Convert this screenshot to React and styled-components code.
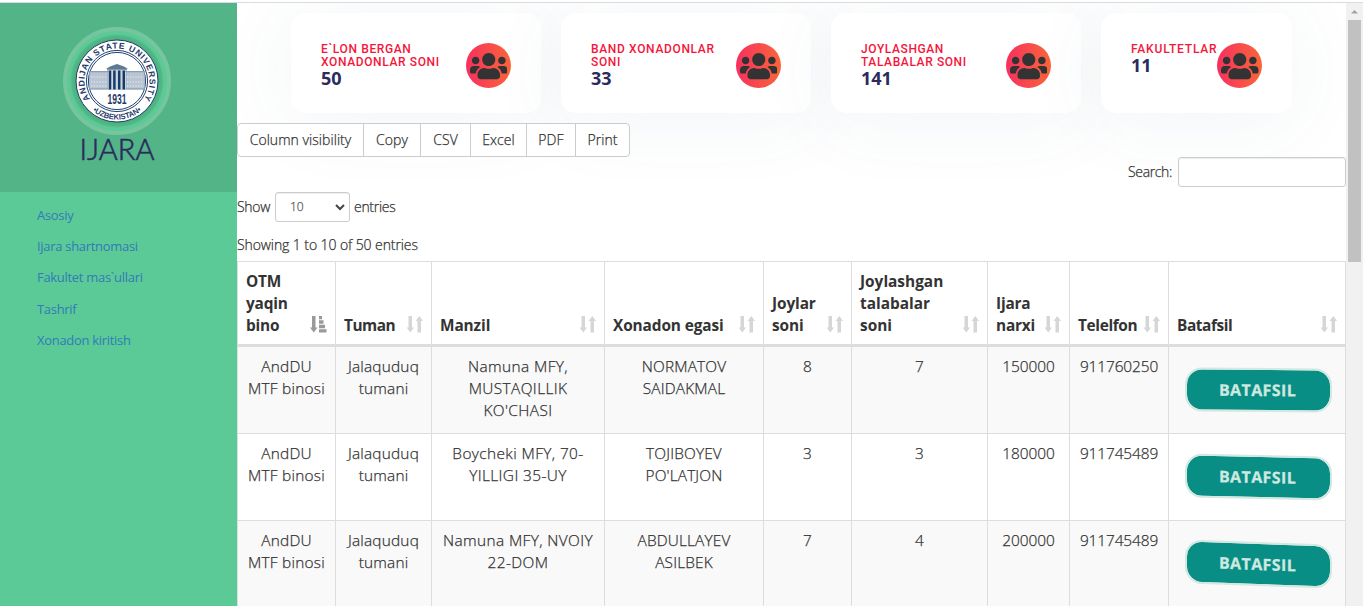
import React from "react";
import styled, { createGlobalStyle } from "styled-components";
import { FaUsers } from "react-icons/fa";

const Global = createGlobalStyle`
  *, *::before, *::after { box-sizing: border-box; }
  html, body { margin: 0; height: 606px; overflow: hidden; background: #fff; }
  body { font-family: "Open Sans", "Noto Sans", sans-serif; font-weight: 300; -webkit-text-stroke: 0.25px; font-size: 14px; line-height: 20px; color: #333; }
`;

const Page = styled.div`
  height: 606px;
  padding-top: 2px;
  display: flex;
  flex-direction: column;
  overflow: hidden;
`;
const TopLine = styled.div`
  height: 1px;
  flex: none;
  background: #d9dbdf;
`;
const Shell = styled.div`
  flex: 1;
  min-height: 0;
  display: flex;
`;
const Sidebar = styled.aside`
  width: 237px;
  flex: none;
  background: #5bca97;
`;
const Brand = styled.div`
  height: 189px;
  padding: 24px 3px 0 0;
  background: #53b587;
  display: flex;
  flex-direction: column;
  align-items: center;
`;
const Ring = styled.div`
  width: 108px;
  height: 108px;
  flex: none;
  border-radius: 50%;
  border: 4px solid #76c59c;
  background: radial-gradient(circle, #4aaa7b 40px, #52b886 45px, #5bca97 47px);
  display: flex;
  align-items: center;
  justify-content: center;
  -webkit-text-stroke: 0;
`;
const BrandName = styled.h1`
  margin: 0;
  font-family: Lato, "Open Sans", sans-serif;
  font-weight: 300;
  font-size: 29px;
  line-height: 27px;
  -webkit-text-stroke: 0.6px #2b2b5e;
  color: #2b2b5e;
`;
const Menu = styled.nav`
  padding: 8px 0 0 37px;
  display: flex;
  flex-direction: column;
`;
const MenuLink = styled.a`
  height: 31.2px;
  line-height: 31px;
  font-size: 13px;
  font-weight: 400;
  -webkit-text-stroke: 0;
  letter-spacing: -0.3px;
  color: #337ab7;
`;

const Main = styled.main`
  width: 1109px;
  flex: none;
  overflow: hidden;
`;
const Cards = styled.section`
  height: 110px;
  padding: 10px 54px 0;
  display: flex;
  gap: 20px;
`;
const Card = styled.article`
  width: ${(p) => p.$w}px;
  height: 100px;
  flex: none;
  padding: 30px;
  border-radius: 15px;
  background: #fff;
  box-shadow: 0 7px 80px rgba(60, 95, 125, 0.07);
  display: flex;
  justify-content: space-between;
  -webkit-text-stroke: 0;
`;
const CardTitle = styled.div`
  font-family: Roboto, "Liberation Sans", sans-serif;
  font-weight: 500;
  font-size: 12px;
  line-height: 13px;
  letter-spacing: ${(p) => p.$ls}px;
  color: #f5163b;
  white-space: pre-line;
`;
const CardValue = styled.div`
  font-weight: 700;
  font-size: 18px;
  line-height: 18px;
  color: #2b2b5e;
`;
const Badge = styled.div`
  width: 45px;
  height: 45px;
  flex: none;
  border-radius: 50%;
  background: linear-gradient(90deg, #f7305f, #f9663a);
  color: #333;
  display: flex;
  align-items: center;
  justify-content: center;
  svg { width: 37.5px; height: 30px; }
`;

const Buttons = styled.div`
  position: relative;
  margin-top: 10px;
  display: flex;
  height: 34px;
  width: 393px;
  border: 1px solid #ccc;
  border-radius: 4px;
  background: #fff;
`;
const ToolButton = styled.button`
  width: ${(p) => p.$w}px;
  padding: 0;
  border: 0;
  border-right: 1px solid #ccc;
  background: transparent;
  font: inherit;
  letter-spacing: 0.05px;
  color: #333;
  white-space: nowrap;
  &:last-child { border-right: 0; }
`;
const SearchRow = styled.label`
  height: 30px;
  display: flex;
  justify-content: flex-end;
  align-items: center;
  gap: 6px;
  letter-spacing: -0.35px;
`;
const SearchInput = styled.input`
  width: 168px;
  height: 30px;
  border: 1px solid #ccc;
  border-radius: 3px;
  background: #fff;
  box-shadow: inset 0 1px 1px rgba(0, 0, 0, 0.075);
`;
const LengthRow = styled.div`
  margin-top: 5px;
  height: 30px;
  display: flex;
  align-items: center;
  letter-spacing: -0.3px;
`;
const Select = styled.div`
  width: 75px;
  height: 30px;
  margin: 0 4px;
  padding: 0 4px 0 14px;
  border: 1px solid #ccc;
  border-radius: 3px;
  background: #fff;
  box-shadow: inset 0 1px 1px rgba(0, 0, 0, 0.075);
  display: flex;
  align-items: center;
  justify-content: space-between;
  font-size: 12px;
  letter-spacing: 0;
  color: #555;
`;
const ShowText = styled.span`
  width: 34px;
`;
const Info = styled.div`
  margin-top: 13px;
  height: 26px;
  line-height: 20px;
  letter-spacing: -0.09px;
`;

const Table = styled.table`
  width: 1109px;
  table-layout: fixed;
  border-collapse: separate;
  border-spacing: 0;
  border: 1px solid #ddd;
  border-width: 1px 0 0 1px;
  font-size: 15.4px;
  line-height: 22px;
`;
const HeadCell = styled.th`
  height: 85px;
  padding: 8px 8px 7px;
  border-right: 1px solid #ddd;
  border-bottom: 3px solid #ddd;
  vertical-align: bottom;
  text-align: left;
  font-weight: 700;
  -webkit-text-stroke: 0;
  letter-spacing: ${(p) => p.$ls}px;
`;
const HeadInner = styled.div`
  display: flex;
  align-items: flex-end;
  justify-content: space-between;
  white-space: pre;
  svg { flex: none; display: block; margin: 0 0 4px; }
`;
const Row = styled.tr`
  background: ${(p) => (p.$odd ? "#f9f9f9" : "#fff")};
`;
const Cell = styled.td`
  height: 87px;
  padding: ${(p) => (p.$middle ? "8px 0" : "9px 0 7px")};
  border-right: 1px solid #ddd;
  border-bottom: 1px solid #ddd;
  vertical-align: ${(p) => (p.$middle ? "middle" : "top")};
  text-align: center;
  white-space: pre-line;
  letter-spacing: ${(p) => p.$ls || 0}px;
`;
const Detail = styled.button`
  display: block;
  width: 147px;
  height: 44px;
  margin: 0 0 0 15.5px;
  padding: 0 2px 0 0;
  border: 2px solid #d3e8e1;
  border-radius: 17px;
  background: #098e85;
  background-clip: padding-box;
  color: #cfe9e0;
  font-family: "Open Sans", sans-serif;
  font-weight: 700;
  font-size: 16px;
  line-height: 40px;
  letter-spacing: 0.4px;
  transform: skewY(${(p) => p.$skew}deg);
`;

const Scrollbar = styled.div`
  width: 17px;
  flex: none;
  background: #f1f1f1;
  display: flex;
  flex-direction: column;
  align-items: center;
  padding-top: 6px;
`;
const Thumb = styled.div`
  margin-top: 6px;
  width: 13px;
  height: 242px;
  background: #c1c1c1;
`;

const Emblem = () => (
  <svg width="84" height="84" viewBox="-42 -42 84 84">
    <defs>
      <path id="arcTop" d="M -27 18.2 A 32.5 32.5 0 1 1 27 18.2" />
      <path id="arcBottom" d="M -27.5 27 A 38.5 38.5 0 0 0 27.5 27" />
    </defs>
    <circle r="41" fill="#fff" stroke="#1f4272" strokeWidth="1" />
    <circle r="30.6" fill="none" stroke="#1f4272" strokeWidth="1" />
    <circle r="28.6" fill="none" stroke="#1f4272" strokeWidth="1" />
    <g fill="#1f3a68" fontFamily="Liberation Sans, sans-serif" fontWeight="700">
      <text fontSize="8.6" textLength="140" lengthAdjust="spacing">
        <textPath href="#arcTop">ANDIJAN STATE UNIVERSITY</textPath>
      </text>
      <text fontSize="7.8" textAnchor="middle">
        <textPath href="#arcBottom" startOffset="50%" textLength="53" lengthAdjust="spacingAndGlyphs">•UZBEKISTAN•</textPath>
      </text>
      <text x="0" y="23.2" fontSize="14" textAnchor="middle" textLength="19" lengthAdjust="spacingAndGlyphs">1931</text>
    </g>
    <g fill="#b9c5d3" stroke="#8497b0" strokeWidth="0.5">
      <rect x="-27.5" y="-9" width="18.5" height="17" />
      <rect x="9" y="-9" width="18.5" height="17" />
    </g>
    <g stroke="#eef2f6" strokeWidth="1.2" strokeDasharray="1.2 1.6">
      <path d="M-26 -4H-10M10 -4H26M-26 1H-10M10 1H26M-26 5H-10M10 5H26" />
    </g>
    <path d="M-28 -9.5H28M-28 8H28" stroke="#8b9db5" strokeWidth="1" />
    <path d="M-11 -12L-7 -14.5L0 -17L7 -14.5L11 -12Z" fill="#5f7894" />
    <path d="M-10 -12H10V-10.5H-10Z" fill="#8497ad" />
    <rect x="-8.5" y="-10.5" width="17" height="19" fill="#cbd5e0" />
    <path d="M-7 -10.5V8.5M-2.6 -10.5V8.5M2.2 -10.5V8.5M6.8 -10.5V8.5" stroke="#173b68" strokeWidth="2.5" />
  </svg>
);

const SortBoth = () => (
  <svg width="16" height="17" viewBox="0 0 16 17" fill="#d6d6d6">
    <path d="M1.5 0H5V11.5H7L3.3 16.5L-0.3 11.5H1.5Z" />
    <path d="M10.5 16.5H14V5H16L12.3 0L8.6 5H10.5Z" />
  </svg>
);
const SortAsc = () => (
  <svg width="17" height="17" viewBox="0 0 17 17" fill="#999">
    <path d="M2 0H5.5V11.5H7.5L3.8 16.5L0 11.5H2Z" />
    <path d="M9 0H12V3.2H9ZM9 4.3H13.5V7.7H9ZM9 8.8H15V12.2H9ZM9 13.3H16.5V16.5H9Z" />
  </svg>
);

const menu = ["Asosiy", "Ijara shartnomasi", "Fakultet mas`ullari", "Tashrif", "Xonadon kiritish"];
const cards = [
  ["E`LON BERGAN\nXONADONLAR SONI", 50, 250, 0.62],
  ["BAND XONADONLAR\nSONI", 33, 250, 0.65],
  ["JOYLASHGAN\nTALABALAR SONI", 141, 250, 0.6],
  ["FAKULTETLAR", 11, 191, 0.8],
];
const tools = [
  ["Column visibility", 126],
  ["Copy", 57],
  ["CSV", 50],
  ["Excel", 56],
  ["PDF", 49],
  ["Print", 53],
];
const columns = [
  ["OTM\nyaqin\nbino", 98, -0.2],
  ["Tuman", 96, -0.5],
  ["Manzil", 173, -0.1],
  ["Xonadon egasi", 159, -0.1],
  ["Joylar\nsoni", 88, -0.1],
  ["Joylashgan\ntalabalar\nsoni", 136, 0],
  ["Ijara\nnarxi", 82, -0.2],
  ["Telelfon", 99, -0.35],
  ["Batafsil", 177, -0.4],
];
const cellSpacing = [0.25, 0.2, 0.4, 0.15, 0, 0, -0.04, -0.1];
const rows = [
  ["AndDU\nMTF binosi", "Jalaquduq\ntumani", "Namuna MFY,\nMUSTAQILLIK\nKO'CHASI", "NORMATOV\nSAIDAKMAL", "8", "7", "150000", "911760250"],
  ["AndDU\nMTF binosi", "Jalaquduq\ntumani", "Boycheki MFY, 70-\nYILLIGI 35-UY", "TOJIBOYEV\nPO'LATJON", "3", "3", "180000", "911745489"],
  ["AndDU\nMTF binosi", "Jalaquduq\ntumani", "Namuna MFY, NVOIY\n22-DOM", "ABDULLAYEV\nASILBEK", "7", "4", "200000", "911745489"],
];
const skews = [0.45, 1.15, 2];

export default function App() {
  return (
    <Page>
      <Global />
      <TopLine />
      <Shell>
        <Sidebar>
          <Brand>
            <Ring><Emblem /></Ring>
            <BrandName>IJARA</BrandName>
          </Brand>
          <Menu>
            {menu.map((m) => <MenuLink key={m}>{m}</MenuLink>)}
          </Menu>
        </Sidebar>
        <Main>
          <Cards>
            {cards.map(([title, value, w, ls]) => (
              <Card key={title} $w={w}>
                <div>
                  <CardTitle $ls={ls}>{title}</CardTitle>
                  <CardValue>{value}</CardValue>
                </div>
                <Badge><FaUsers /></Badge>
              </Card>
            ))}
          </Cards>
          <Buttons>
            {tools.map(([t, w]) => <ToolButton key={t} $w={w}>{t}</ToolButton>)}
          </Buttons>
          <SearchRow>Search:<SearchInput /></SearchRow>
          <LengthRow>
            <ShowText>Show</ShowText>
            <Select>
              10
              <svg width="10" height="7" viewBox="0 0 10 7" fill="none" stroke="#444" strokeWidth="2"><path d="M1 1L5 5L9 1" /></svg>
            </Select>
            entries
          </LengthRow>
          <Info>Showing 1 to 10 of 50 entries</Info>
          <Table>
            <colgroup>
              {columns.map(([c, w]) => <col key={c} width={w} />)}
            </colgroup>
            <thead>
              <tr>
                {columns.map(([c, , ls], i) => (
                  <HeadCell key={c} $ls={ls}>
                    <HeadInner><span>{c}</span>{i === 0 ? <SortAsc /> : <SortBoth />}</HeadInner>
                  </HeadCell>
                ))}
              </tr>
            </thead>
            <tbody>
              {rows.map((r, i) => (
                <Row key={i} $odd={i % 2 === 0}>
                  {r.map((c, j) => <Cell key={j} $ls={cellSpacing[j]}>{c}</Cell>)}
                  <Cell $middle><Detail $skew={skews[i]}>BATAFSIL</Detail></Cell>
                </Row>
              ))}
            </tbody>
          </Table>
        </Main>
        <Scrollbar>
          <svg width="7" height="5" viewBox="0 0 7 5"><path d="M0 4.5L3.5 1L7 4.5Z" fill="#a3a3a3" /></svg>
          <Thumb />
        </Scrollbar>
      </Shell>
    </Page>
  );
}
